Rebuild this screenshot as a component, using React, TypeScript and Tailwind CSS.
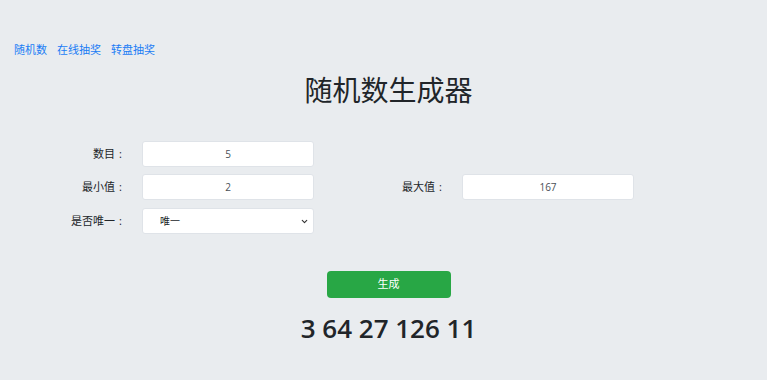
import { ChevronDown } from 'lucide-react'

const font = { fontFamily: '"Open Sans", "Noto Sans CJK SC", sans-serif' }

function Field({ value }: { value: string }) {
  return (
    <input
      readOnly
      value={value}
      className="w-[172px] h-[26px] bg-white border border-[#dfe3e8] rounded-[3px] text-center text-[10px] text-[#495057] outline-none"
    />
  )
}

function Label({ text, w }: { text: string; w: string }) {
  return (
    <label className={`${w} text-right`}>
      {text}
      <span className="inline-block w-[11px] text-center">:</span>
    </label>
  )
}

export default function App() {
  return (
    <div className="min-h-screen bg-[#e9ecef] text-[#212529]" style={font}>
      <nav className="flex gap-[10px] pt-[42px] pl-[14px] text-[11px] leading-[16px] text-[#1a7cf5]">
        <a href="#">随机数</a>
        <a href="#">在线抽奖</a>
        <a href="#">转盘抽奖</a>
      </nav>

      <h1 className="mt-[15px] pl-[10px] text-center text-[28px] leading-[34px] font-normal">
        随机数生成器
      </h1>

      <div className="mt-[34px] flex flex-col gap-[7px] text-[11px]">
        <div className="flex items-center">
          <Label text="数目" w="w-[126px]" />
          <div className="ml-[16px]">
            <Field value="5" />
          </div>
        </div>
        <div className="flex items-center">
          <Label text="最小值" w="w-[126px]" />
          <div className="ml-[16px]">
            <Field value="2" />
          </div>
          <Label text="最大值" w="w-[132px]" />
          <div className="ml-[16px]">
            <Field value="167" />
          </div>
        </div>
        <div className="flex items-center mt-[1px]">
          <Label text="是否唯一" w="w-[126px]" />
          <div className="ml-[16px] relative w-[172px]">
            <select className="w-full h-[26px] appearance-none bg-white border border-[#dfe3e8] rounded-[3px] pl-[17px] text-[10px] text-[#212529] outline-none">
              <option>唯一</option>
              <option>不唯一</option>
            </select>
            <ChevronDown
              size={9}
              strokeWidth={3}
              className="absolute right-[5px] top-[9px] text-[#333] pointer-events-none"
            />
          </div>
        </div>
      </div>

      <div className="mt-[37px] pl-[10px] flex justify-center">
        <button className="w-[124px] h-[27px] rounded-[4px] bg-[#28a745] text-white text-[11px]">
          生成
        </button>
      </div>

      <div className="mt-[13px] pl-[10px] text-center text-[26px] leading-[34px] font-semibold">
        3 64 27 126 11
      </div>
    </div>
  )
}
